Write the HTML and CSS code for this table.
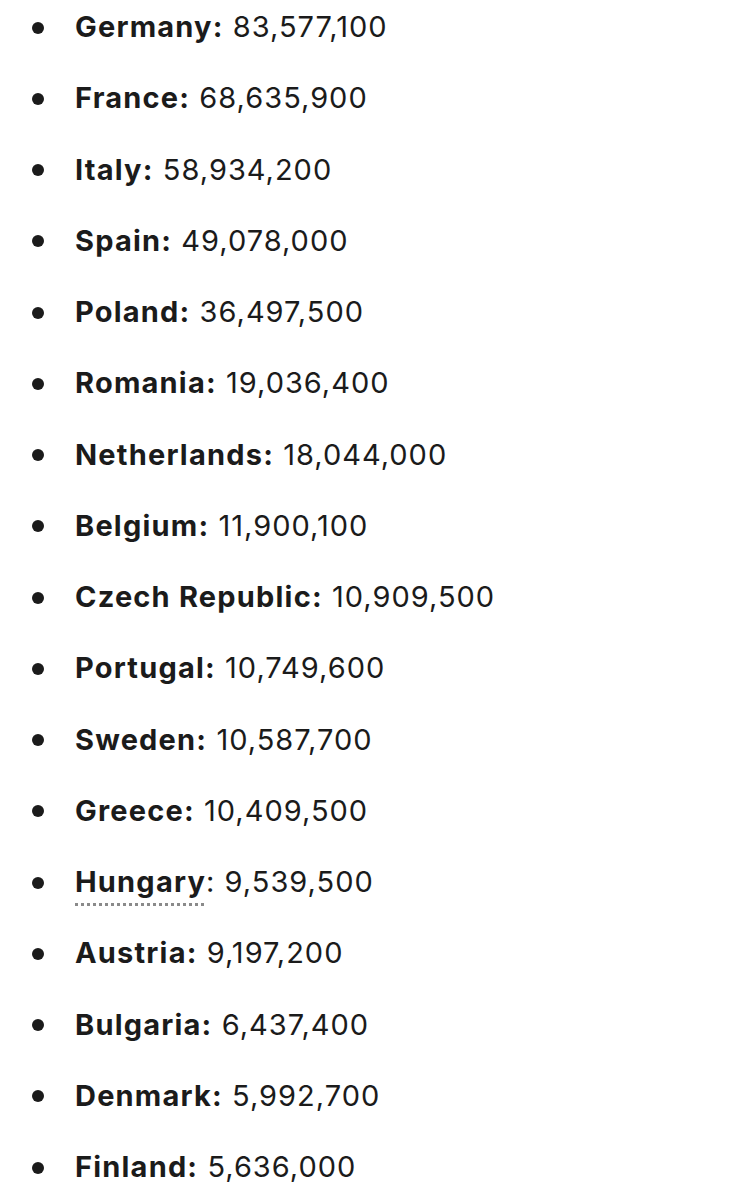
FILE: index.html
```html
<!DOCTYPE html>
<html>
<head>
<meta charset="utf-8">
<link rel="stylesheet" href="styles.css">
</head>
<body>
<ul class="list">
  <li class="item"><b>Germany:</b> 83,577,100</li>
  <li class="item"><b>France:</b> 68,635,900</li>
  <li class="item"><b>Italy:</b> 58,934,200</li>
  <li class="item"><b>Spain:</b> 49,078,000</li>
  <li class="item"><b>Poland:</b> 36,497,500</li>
  <li class="item"><b>Romania:</b> 19,036,400</li>
  <li class="item"><b>Netherlands:</b> 18,044,000</li>
  <li class="item"><b>Belgium:</b> 11,900,100</li>
  <li class="item"><b>Czech Republic:</b> 10,909,500</li>
  <li class="item"><b>Portugal:</b> 10,749,600</li>
  <li class="item"><b>Sweden:</b> 10,587,700</li>
  <li class="item"><b>Greece:</b> 10,409,500</li>
  <li class="item"><b class="link">Hungary</b>: 9,539,500</li>
  <li class="item"><b>Austria:</b> 9,197,200</li>
  <li class="item"><b>Bulgaria:</b> 6,437,400</li>
  <li class="item"><b>Denmark:</b> 5,992,700</li>
  <li class="item"><b>Finland:</b> 5,636,000</li>
</ul>
</body>
</html>
```
FILE: styles.css
```css
html, body {
  margin: 0;
  padding: 0;
  background: #ffffff;
}
body {
  font-family: Inter, "Liberation Sans", sans-serif;
  color: #1b1b1b;
  font-size: 29px;
}
.list {
  list-style: none;
  margin: 0;
  padding: 7px 0 0 0;
  display: flex;
  flex-direction: column;
  gap: 31.25px;
}
.item {
  display: flex;
  align-items: flex-start;
  height: 40px;
  line-height: 40px;
  white-space: pre;
  letter-spacing: 1px;
}
.item::before {
  content: "";
  width: 12px;
  height: 12px;
  border-radius: 50%;
  background: #1b1b1b;
  margin-top: 14.5px;
  margin-left: 32px;
  margin-right: 31px;
  flex: none;
}
.item b {
  font-weight: 700;
  letter-spacing: 1.2px;
}
.link {
  text-decoration: underline dotted #8a8a8a;
  text-decoration-thickness: 2.5px;
  text-underline-offset: 11px;
}
```
